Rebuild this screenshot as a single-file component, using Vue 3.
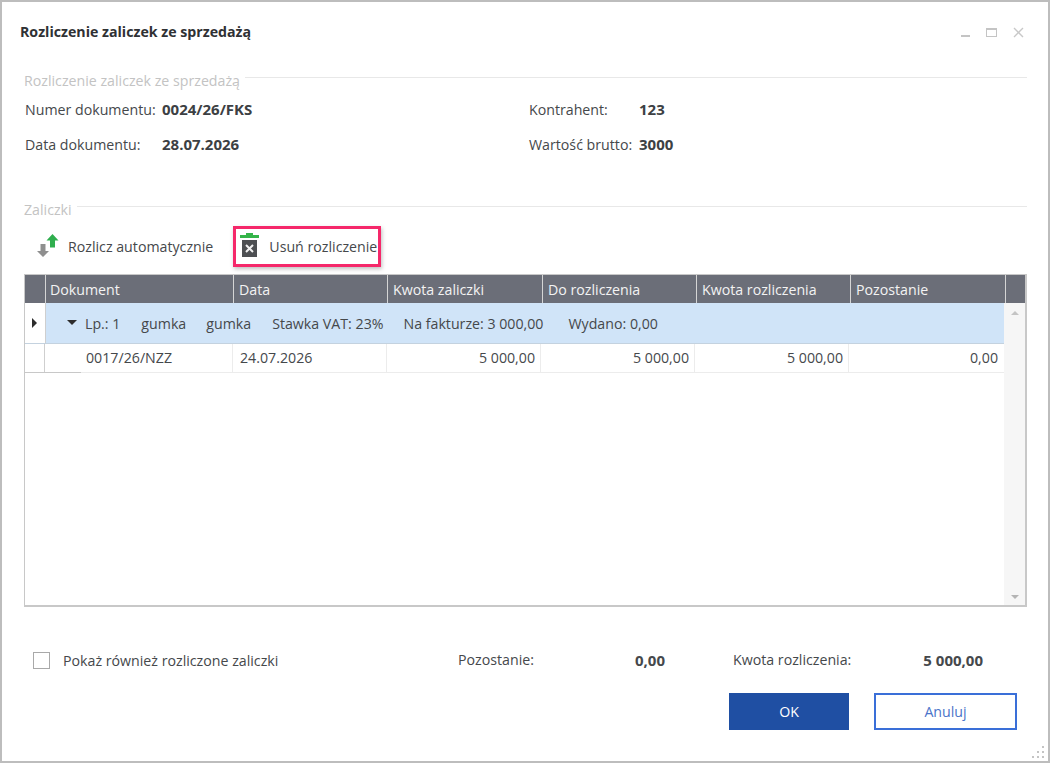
<script setup>
const columns = ['Dokument', 'Data', 'Kwota zaliczki', 'Do rozliczenia', 'Kwota rozliczenia', 'Pozostanie']
const row = ['0017/26/NZZ', '24.07.2026', '5 000,00', '5 000,00', '5 000,00', '0,00']
const groupInfo = ['Lp.: 1', 'gumka', 'gumka', 'Stawka VAT: 23%', 'Na fakturze: 3 000,00', 'Wydano: 0,00']
</script>

<template>
  <div class="window">
    <header class="titlebar">
      <h1 class="title">Rozliczenie zaliczek ze sprzedażą</h1>
      <div class="controls">
        <svg width="12" height="12" viewBox="0 0 12 12"><rect x="1" y="8" width="9" height="2" fill="#c4c4c4" /></svg>
        <svg width="12" height="12" viewBox="0 0 12 12"><rect x="0.5" y="1.5" width="10" height="8" fill="none" stroke="#c4c4c4" /><rect x="0.5" y="1" width="10" height="2" fill="#c4c4c4" /></svg>
        <svg width="12" height="12" viewBox="0 0 12 12"><path d="M1 1l9 9M10 1l-9 9" stroke="#c8c8c8" stroke-width="1.4" fill="none" /></svg>
      </div>
    </header>

    <section class="doc">
      <div class="legend"><span>Rozliczenie zaliczek ze sprzedażą</span><i></i></div>
      <div class="fields">
        <div class="field"><span class="lbl">Numer dokumentu:</span><b>0024/26/FKS</b></div>
        <div class="field f2"><span class="lbl">Kontrahent:</span><b>123</b></div>
        <div class="field"><span class="lbl">Data dokumentu:</span><b>28.07.2026</b></div>
        <div class="field f2"><span class="lbl">Wartość brutto:</span><b>3000</b></div>
      </div>
    </section>

    <section class="advances">
      <div class="legend"><span>Zaliczki</span><i></i></div>
      <div class="toolbar">
        <button class="tool auto" type="button">
          <svg width="24" height="26" viewBox="0 0 24 26">
            <path d="M3.500 11h5v7h3.500l-6 6-6-6h3.500z" fill="#8f8f8f" />
            <path d="M15.500 1l6 6.500h-3.500v7h-5v-7h-3.500z" fill="#2fae4e" />
          </svg>
          Rozlicz automatycznie
        </button>
        <button class="tool remove" type="button">
          <svg width="20" height="26" viewBox="0 0 20 26">
            <rect x="6" y="0" width="7" height="3" fill="#35b54a" />
            <rect x="0" y="2" width="19" height="3" fill="#35b54a" />
            <rect x="2" y="7" width="15" height="17" fill="#4d4f52" />
            <path d="M6 12l7 7M13 12l-7 7" stroke="#f2f2f2" stroke-width="2" fill="none" />
          </svg>
          Usuń rozliczenie
        </button>
      </div>

      <div class="grid">
        <div class="grid-main">
          <div class="head">
            <div class="corner"></div>
            <div v-for="c in columns" :key="c" class="hcell">{{ c }}</div>
            <div class="hscroll"></div>
          </div>
          <div class="body">
            <div class="rows">
              <div class="group">
                <div class="indicator"><span class="play"></span></div>
                <div class="group-info">
                  <span class="caret"></span>
                  <span v-for="(g, i) in groupInfo" :key="i">{{ g }}</span>
                </div>
              </div>
              <div class="data">
                <div class="indicator plain"></div>
                <div v-for="(v, i) in row" :key="i" class="cell" :class="{ num: i > 1, first: i === 0 }">{{ v }}</div>
              </div>
            </div>
            <div class="scrollbar">
              <span class="up"></span>
              <span class="down"></span>
            </div>
          </div>
        </div>
      </div>
    </section>

    <footer class="summary">
      <label class="check"><span class="box"></span>Pokaż również rozliczone zaliczki</label>
      <div class="sum s1"><span>Pozostanie:</span><b>0,00</b></div>
      <div class="sum s2"><span>Kwota rozliczenia:</span><b>5 000,00</b></div>
    </footer>
    <div class="actions">
      <button class="btn ok" type="button">OK</button>
      <button class="btn cancel" type="button">Anuluj</button>
    </div>
    <svg class="grip" width="14" height="14" viewBox="0 0 14 14" fill="#c4c4c4">
      <rect x="10" y="1" width="2" height="2" />
      <rect x="5" y="6" width="2" height="2" /><rect x="10" y="6" width="2" height="2" />
      <rect x="0" y="11" width="2" height="2" /><rect x="5" y="11" width="2" height="2" /><rect x="10" y="11" width="2" height="2" />
    </svg>
  </div>
</template>

<style>
html, body { margin: 0; background: #fff; }
</style>

<style scoped>
.window {
  position: relative;
  box-sizing: border-box;
  width: 1050px;
  height: 763px;
  background: #fff;
  border: 2px solid #bdbdbd;
  font-family: "Open Sans", "Noto Sans", sans-serif;
  font-size: 14.2px;
  color: #45484b;
  overflow: hidden;
}
.titlebar { display: flex; align-items: center; justify-content: space-between; height: 20px; padding: 19px 23px 0 18px; }
.title { margin: 0; font-size: 14.2px; font-weight: 700; color: #2f3134; }
.controls { display: flex; gap: 15px; margin-top: 3px; }
.controls svg:first-child { margin-right: -1px; }
.legend { display: flex; align-items: center; color: #c3c3c3; line-height: 18px; }
.legend i { flex: 1; height: 1px; background: #e8e8e8; margin-left: 5px; margin-top: -8px; }
.doc { padding: 0 21px 0 22px; margin-top: 31px; }
.fields { display: grid; grid-template-columns: 504px 1fr; row-gap: 17px; margin-top: 10px; padding-left: 1px; }
.field { display: flex; align-items: center; height: 18px; }
.field .lbl { width: 137px; white-space: nowrap; }
.f2 .lbl { width: 110px; }
.field b { font-weight: 700; font-size: 15px; color: #3c4043; }
.advances { padding: 0 21px 0 22px; margin-top: 48px; }
.toolbar { display: flex; align-items: center; height: 40px; margin-top: 7px; }
.tool { display: flex; align-items: center; background: none; border: 0; padding: 0; font: inherit; color: #45484b; white-space: nowrap; }
.auto { margin-left: 13px; gap: 7px; }
.remove {
  box-sizing: border-box;
  margin-left: 20px;
  height: 41px;
  width: 148px;
  padding-left: 4px;
  gap: 9px;
  border: 3px solid #f5286a;
  box-shadow: 1px 2px 4px rgba(0, 0, 0, .25);
}
.grid { margin-top: 8px; border: 1px solid #c8c8c8; border-width: 1px 2px 2px 1px; width: 1003px; box-sizing: border-box; height: 333px; }
.grid-main { height: 100%; display: flex; flex-direction: column; }
.head { display: flex; height: 28px; background: #6b6e78; color: #f3f3f3; flex: none; }
.corner { width: 20px; border-right: 1px solid #d5d5d5; }
.hcell { box-sizing: border-box; width: 154px; padding: 5px 0 0 5px; border-right: 1px solid #d5d5d5; line-height: 20px; white-space: nowrap; }
.hcell:nth-child(2) { width: 188px; padding-left: 4px; }
.hcell:nth-child(4) { width: 155px; }
.hcell:nth-child(7) { width: 155px; }
.hscroll { flex: 1; }
.body { flex: 1; display: flex; min-height: 0; }
.rows { flex: 1; }
.group { display: flex; height: 41px; background: #d0e4f8; border-bottom: 1px solid #c4d2df; box-sizing: border-box; }
.indicator { flex: none; width: 20px; background: #fff; border-right: 1px solid #cfcfcf; display: flex; align-items: center; justify-content: center; }
.play { width: 0; height: 0; border-left: 5px solid #2d2d2d; border-top: 5px solid transparent; border-bottom: 5px solid transparent; margin-right: 1px; }
.group-info { display: flex; align-items: center; gap: 20px; padding-left: 20px; position: relative; white-space: nowrap; }
.group-info span:nth-child(2) { margin-left: 19px; }
.group-info span:nth-child(3) { margin-left: 1px; }
.group-info span:nth-child(5) { margin-left: 1px; }
.group-info span:nth-child(7) { margin-left: 5px; }
.caret { position: absolute; left: 21px; top: 17px; width: 0; height: 0; border-top: 5px solid #2d2d2d; border-left: 5px solid transparent; border-right: 5px solid transparent; }
.data { position: relative; display: flex; height: 28px; border-bottom: 1px solid #ececec; }
.data::after { content: ""; position: absolute; left: 0; bottom: -1px; width: 56px; height: 1px; background: #c8c8c8; }
.data .plain { height: 28px; box-sizing: border-box; }
.cell { box-sizing: border-box; width: 154px; padding: 0 5px 0 7px; line-height: 28px; border-right: 1px solid #ececec; }
.cell.first { width: 188px; padding-left: 41px; }
.cell.num { text-align: right; }
.cell:last-child { border-right: 0; }
.scrollbar { flex: none; width: 21px; background: #f6f6f6; display: flex; flex-direction: column; justify-content: space-between; align-items: center; padding: 8px 0 6px; box-sizing: border-box; }
.up { width: 0; height: 0; border-bottom: 4px solid #c4c4c4; border-left: 4px solid transparent; border-right: 4px solid transparent; }
.down { width: 0; height: 0; border-top: 4px solid #b4b4b4; border-left: 4px solid transparent; border-right: 4px solid transparent; }
.summary { display: flex; align-items: center; height: 18px; margin-top: 44px; padding-left: 31px; }
.check { display: flex; align-items: center; gap: 13px; width: 425px; white-space: nowrap; }
.box { width: 15px; height: 15px; border: 1px solid #a9a9a9; }
.sum { display: flex; justify-content: space-between; white-space: nowrap; }
.s1 { width: 207px; }
.s2 { width: 250px; margin-left: 68px; }
.sum b { font-weight: 700; font-size: 15px; }
.actions { display: flex; justify-content: flex-end; gap: 25px; padding-right: 31px; margin-top: 24px; }
.btn { box-sizing: border-box; height: 37px; font: inherit; }
.ok { background: #1f4fa3; border: 0; color: #fff; width: 120px; }
.cancel { width: 143px; background: #fff; border: 2px solid #3a6fd8; color: #4a74c9; }
.grip { position: absolute; right: 2px; bottom: 2px; }
</style>
